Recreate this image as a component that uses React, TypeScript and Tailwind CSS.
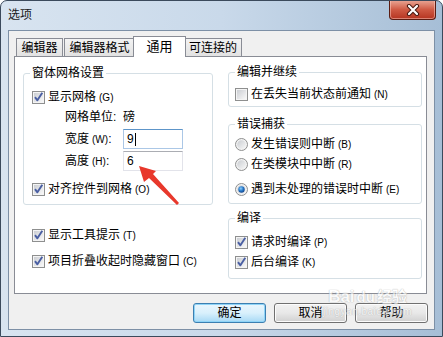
import { useId } from 'react'

const Check = ({ checked = false }: { checked?: boolean }) => {
  const id = useId()
  return (
    <svg width="13" height="13" viewBox="0 0 13 13" className="shrink-0">
      <defs>
        <linearGradient id={id} x1="0" y1="0" x2="1" y2="1">
          <stop offset="0" stopColor="#cbced3" />
          <stop offset="1" stopColor="#f8f8f8" />
        </linearGradient>
      </defs>
      <rect x="0.5" y="0.5" width="12" height="12" fill="#f4f4f4" stroke="#8e8f8f" />
      <rect x="2" y="2" width="9" height="9" fill={`url(#${id})`} />
      {checked && (
        <path d="M3 6.2 L5.4 9.3 L10.3 1.8" fill="none" stroke="#4a5fa3" strokeWidth="1.9" strokeLinejoin="round" />
      )}
    </svg>
  )
}

const Radio = ({ checked = false }: { checked?: boolean }) => {
  const id = useId()
  return (
    <svg width="13" height="13" viewBox="0 0 13 13" className="shrink-0">
      <defs>
        <linearGradient id={id + 'a'} x1="0" y1="0" x2="1" y2="1">
          <stop offset="0" stopColor="#c9ccd1" />
          <stop offset="1" stopColor="#f7f7f7" />
        </linearGradient>
        <radialGradient id={id + 'b'} cx="0.4" cy="0.35" r="0.7">
          <stop offset="0" stopColor="#8fd0fb" />
          <stop offset="0.5" stopColor="#2a7ccc" />
          <stop offset="1" stopColor="#0e3f86" />
        </radialGradient>
      </defs>
      <circle cx="6.5" cy="6.5" r="6" fill="#f2f2f2" stroke="#8e8f8f" />
      <circle cx="6.5" cy="6.5" r="4.3" fill={`url(#${id}a)`} />
      {checked && <circle cx="6.5" cy="6.5" r="3.2" fill={`url(#${id}b)`} />}
    </svg>
  )
}

const Group = ({
  title,
  className,
  children,
}: {
  title: string
  className: string
  children: React.ReactNode
}) => (
  <div className={`relative rounded-[3px] border border-[#d5dfe5] ${className}`}>
    <span className="absolute -top-[8px] left-[6px] bg-white px-[2px]">{title}</span>
    {children}
  </div>
)

const Row = ({ children, className = '' }: { children: React.ReactNode; className?: string }) => (
  <div className={`flex h-[20px] items-center gap-[3px] ${className}`}>{children}</div>
)

// label with the small latin access key, e.g. 显示网格 (G)
const Label = ({ text, k }: { text: string; k: string }) => (
  <span>
    {text}
    <span className="ml-[3px] text-[10px]">({k})</span>
  </span>
)

const tabs = [
  { label: '编辑器', w: 'w-[47px] ml-[7px]' },
  { label: '编辑器格式', w: 'w-[71px] ml-[1px]' },
  { label: '通用', w: 'w-[53px] -ml-[2px]', active: true },
  { label: '可连接的', w: 'w-[58px] -ml-[2px]' },
]

export default function App() {
  return (
    <div className="relative h-[337px] w-[443px] overflow-hidden rounded-t-[7px] border border-[#3b4a5c] bg-gradient-to-r from-[#d8e4f0] via-[#c9d9ea] to-[#a6bed6] font-['Liberation_Sans','Noto_Sans_CJK_SC',sans-serif] text-[12px] leading-[14px] text-black">
      {/* title bar */}
      <div className="flex h-[29px] items-start">
        <span className="ml-[7px] mt-[7px] text-[12px] text-[#1a1a1a]">选项</span>
        <div className="-mt-[1px] mr-[6px] ml-auto flex h-[20px] w-[47px] items-center justify-center rounded-b-[4px] border border-t-0 border-[#5a1c12] bg-gradient-to-b from-[#e9a898] via-[#cf5a44] to-[#b53320] shadow-[inset_0_0_0_1px_rgba(255,210,200,0.5)]">
          <svg width="14" height="12" viewBox="0 0 14 12">
            <path d="M3 2 L11 10 M11 2 L3 10" stroke="#4a1a12" strokeWidth="4.2" strokeLinecap="round" />
            <path d="M3 2 L11 10 M11 2 L3 10" stroke="#ffffff" strokeWidth="2.2" strokeLinecap="round" />
          </svg>
        </div>
      </div>

      {/* client area */}
      <div className="mx-[7px] flex h-[300px] flex-col border border-[#7d90a6] bg-[#f0f0f0]">
        <div className="mt-[5px] flex h-[20px] items-end">
          {tabs.map((t) =>
            t.active ? (
              <div
                key={t.label}
                className={`relative z-10 -mb-[1px] flex h-[21px] items-start justify-center border border-b-0 border-[#898c95] bg-white pt-[3px] text-[13px] ${t.w}`}
              >
                {t.label}
              </div>
            ) : (
              <div
                key={t.label}
                className={`flex h-[18px] items-center justify-center border border-b-0 border-[#898c95] bg-gradient-to-b from-[#f3f3f3] to-[#e2e2e2] pt-[1px] ${t.w}`}
              >
                {t.label}
              </div>
            ),
          )}
        </div>

        {/* tab panel */}
        <div className="ml-[5px] flex h-[238px] w-[413px] border border-[#898c95] bg-white">
          {/* left column */}
          <div className="ml-[8px] mt-[16px] flex w-[190px] flex-col">
            <Group title="窗体网格设置" className="h-[132px] pt-[13px]">
              <Row className="pl-[8px]">
                <Check checked />
                <Label text="显示网格" k="G" />
              </Row>
              <Row className="pl-[41px]">网格单位:&nbsp;&nbsp;磅</Row>
              <div className="mt-[2px] flex h-[20px] items-center pl-[41px]">
                <span className="w-[58px]">
                  宽度<span className="ml-[3px] text-[10px]">(W)</span>:
                </span>
                <div className="flex h-[20px] w-[60px] items-center border border-[#abc7e6] border-t-[#5d95c9] bg-white pl-[3px]">
                  9<span className="ml-[1px] h-[13px] w-[1px] bg-black" />
                </div>
              </div>
              <div className="mt-[2px] flex h-[20px] items-center pl-[41px]">
                <span className="w-[58px]">
                  高度<span className="ml-[3px] text-[10px]">(H)</span>:
                </span>
                <div className="flex h-[20px] w-[60px] items-center border border-[#e2e3ea] border-t-[#abadb3] bg-white pl-[3px]">
                  6
                </div>
              </div>
              <Row className="mt-[8px] pl-[8px]">
                <Check checked />
                <Label text="对齐控件到网格" k="O" />
              </Row>
            </Group>
            <Row className="mt-[20px] pl-[9px]">
              <Check checked />
              <Label text="显示工具提示" k="T" />
            </Row>
            <Row className="mt-[6px] pl-[9px]">
              <Check checked />
              <Label text="项目折叠收起时隐藏窗口" k="C" />
            </Row>
          </div>

          {/* right column */}
          <div className="ml-[15px] mt-[15px] flex w-[194px] flex-col">
            <Group title="编辑并继续" className="h-[35px] pt-[11px]">
              <Row className="pl-[6px]">
                <Check />
                <Label text="在丢失当前状态前通知" k="N" />
              </Row>
            </Group>
            <Group title="错误捕获" className="mt-[17px] h-[80px] pt-[9px]">
              <Row className="pl-[6px]">
                <Radio />
                <Label text="发生错误则中断" k="B" />
              </Row>
              <Row className="pl-[6px]">
                <Radio />
                <Label text="在类模块中中断" k="R" />
              </Row>
              <Row className="mt-[5px] pl-[6px]">
                <Radio checked />
                <Label text="遇到未处理的错误时中断" k="E" />
              </Row>
            </Group>
            <Group title="编译" className="mt-[14px] h-[61px] pt-[13px]">
              <Row className="pl-[6px]">
                <Check checked />
                <Label text="请求时编译" k="P" />
              </Row>
              <Row className="pl-[6px]">
                <Check checked />
                <Label text="后台编译" k="K" />
              </Row>
            </Group>
          </div>
        </div>

        {/* buttons */}
        <div className="mr-[6px] mt-[9px] flex justify-end gap-[8px]">
          <button className="h-[20px] w-[73px] rounded-[3px] border border-[#3c7fb1] bg-gradient-to-b from-[#eaf6fd] via-[#d9f0fc] to-[#a7d9f5] shadow-[inset_0_0_0_1px_#8fd4f7]">
            确定
          </button>
          <button className="h-[20px] w-[73px] rounded-[3px] border border-[#707070] bg-gradient-to-b from-[#f2f2f2] via-[#e8e8e8] to-[#d0d0d0] shadow-[inset_0_0_0_1px_#fcfcfc]">
            取消
          </button>
          <button className="h-[20px] w-[73px] rounded-[3px] border border-[#707070] bg-gradient-to-b from-[#f2f2f2] via-[#e8e8e8] to-[#d0d0d0] shadow-[inset_0_0_0_1px_#fcfcfc]">
            帮助
          </button>
        </div>
      </div>

      {/* watermark */}
      <div className="pointer-events-none absolute left-[322px] top-[287px] flex flex-col items-center text-white opacity-60 [text-shadow:0_0_1px_#9a9a9a,0_0_1px_#9a9a9a]">
        <div className="flex items-end gap-[2px]">
          <span className="text-[17px] font-bold leading-[18px]">Bai</span>
          <span className="text-[15px] font-bold leading-[18px]">du</span>
          <span className="text-[15px] font-bold leading-[18px]">经验</span>
        </div>
        <span className="text-[10px] leading-[12px] tracking-[0.5px]">jingyan.baidu.com</span>
      </div>

      {/* red arrow annotation */}
      <svg className="pointer-events-none absolute left-0 top-0" width="443" height="337" viewBox="0 0 443 337">
        <polygon
          points="138,165 143,181 148,177 176,204 178,202 152,173 155,170"
          fill="#e8382c"
        />
      </svg>
    </div>
  )
}
